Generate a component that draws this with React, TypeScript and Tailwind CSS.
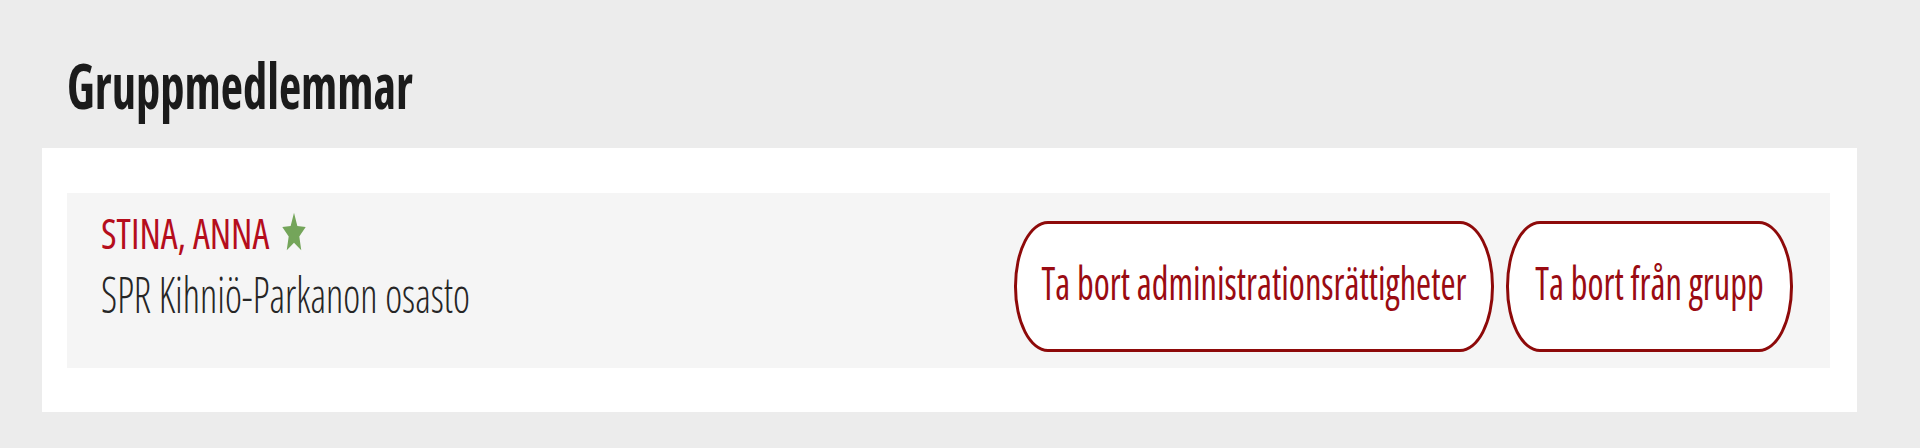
function Star() {
  return (
    <svg viewBox="0 0 24 24" preserveAspectRatio="none" className="w-[26px] h-[44px] shrink-0">
      <path
        d="M12 1.5l3.1 7.2 7.7.6-5.9 5.1 1.8 7.6L12 17.9 5.3 22l1.8-7.6-5.9-5.1 7.7-.6z"
        fill="#74a55a"
      />
    </svg>
  );
}

function OutlineButton({ label, width }: { label: string; width: string }) {
  return (
    <button
      className={`${width} h-[131px] pb-[8px] flex items-center justify-center bg-white border-[3px] border-[#8e0a0a] rounded-[34px/65px]`}
    >
      <span className="inline-block text-[36.5px] leading-[50px] font-medium font-stretch-condensed text-[#9a0b12] scale-y-[1.23]">
        {label}
      </span>
    </button>
  );
}

export default function App() {
  return (
    <div className="w-full h-[448px] bg-[#ececec] overflow-hidden" style={{ fontFamily: '"Open Sans", sans-serif' }}>
      <div className="pt-[51px] pl-[67px]">
        <h1 className="inline-block text-[48.5px] leading-[66px] font-bold font-stretch-condensed text-[#1b1b1b] scale-y-[1.3]">
          Gruppmedlemmar
        </h1>
      </div>

      <div className="mt-[31px] ml-[42px] w-[1815px] bg-white pt-[45px] pb-[44px] pl-[25px] pr-[27px]">
        <div className="h-[175px] bg-[#f5f5f5] flex justify-between items-start">
          <div className="pl-[34px] pt-[13px]">
            <div className="flex items-center gap-[12px] h-[52px]">
              <span className="inline-block text-[38px] leading-[52px] font-medium font-stretch-condensed text-[#b50d1c] scale-y-[1.107]">
                STINA, ANNA
              </span>
              <Star />
            </div>
            <div className="mt-[9px]">
              <span className="inline-block text-[40.5px] leading-[55px] font-light font-stretch-condensed text-[#262626] scale-y-[1.21]">
                SPR Kihniö-Parkanon osasto
              </span>
            </div>
          </div>

          <div className="flex gap-[12px] pt-[28px] pr-[37px]">
            <OutlineButton label="Ta bort administrationsrättigheter" width="w-[480px]" />
            <OutlineButton label="Ta bort från grupp" width="w-[287px]" />
          </div>
        </div>
      </div>
    </div>
  );
}
